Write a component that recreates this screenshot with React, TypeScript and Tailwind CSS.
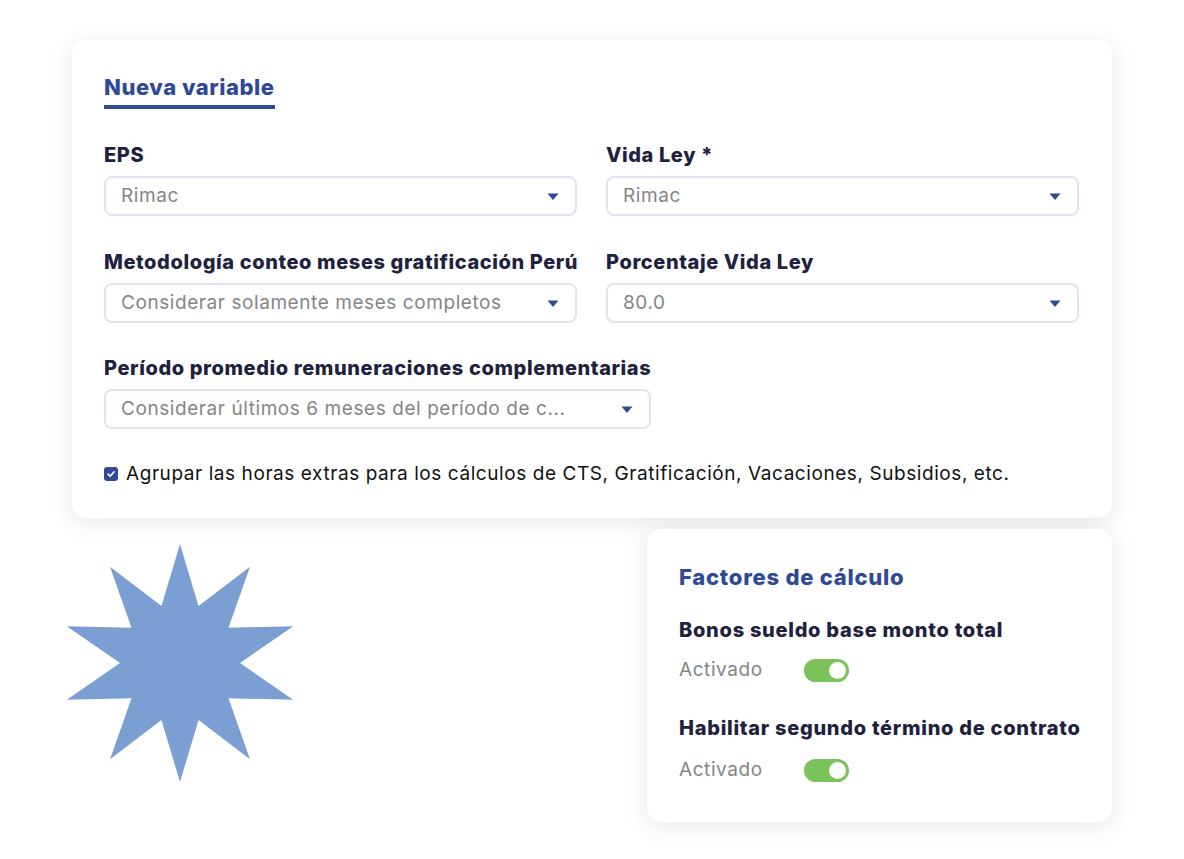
import React from "react";

const font = { fontFamily: "Inter, 'Noto Sans', sans-serif" };

function starPoints(cx: number, cy: number, R: number, r: number, n: number) {
  const pts: string[] = [];
  for (let i = 0; i < n * 2; i++) {
    const a = ((-90 + i * (180 / n)) * Math.PI) / 180;
    const rad = i % 2 === 0 ? R : r;
    pts.push(`${(cx + rad * Math.cos(a)).toFixed(2)},${(cy + rad * Math.sin(a)).toFixed(2)}`);
  }
  return pts.join(" ");
}

function Caret() {
  return (
    <svg width="12" height="8" viewBox="0 0 12 8" className="shrink-0">
      <path d="M0.5 0.5 L11.5 0.5 L6 7 Z" fill="#2f4996" />
    </svg>
  );
}

function Select({ value }: { value: string }) {
  return (
    <div className="h-[40px] rounded-lg border-2 border-[#e2e2f3] bg-white flex items-center justify-between pl-[15px] pr-[16px] pt-[1px]">
      <span className="text-[19px] tracking-[0.03em] text-[#858585] truncate">{value}</span>
      <Caret />
    </div>
  );
}

function Field({ label, value, className = "" }: { label: string; value: string; className?: string }) {
  return (
    <div className={className}>
      <div className="text-[20px] leading-[24px] font-extrabold tracking-[0.03em] text-[#1e2140] mb-[9px] whitespace-nowrap">
        {label}
      </div>
      <Select value={value} />
    </div>
  );
}

function Toggle() {
  return (
    <div className="w-[45px] h-[23px] rounded-full bg-[#7cc25a] flex items-center justify-end pr-[3px]">
      <div className="w-[17px] h-[17px] rounded-full bg-white" />
    </div>
  );
}

export default function App() {
  return (
    <main className="min-h-screen bg-white pt-[40px] pl-[72px]" style={font}>
      {/* Nueva variable */}
      <section className="w-[1040px] rounded-[14px] bg-white shadow-[0_4px_24px_rgba(0,0,0,0.10)] pt-[33px] pb-[32px] px-8">
        <div className="inline-block border-b-4 border-[#2f4996] pb-[4px]">
          <h1 className="text-[22px] leading-[28px] font-extrabold tracking-[0.025em] text-[#2f4996]">Nueva variable</h1>
        </div>

        <div className="grid grid-cols-2 gap-x-[29px] gap-y-[34px] mt-[34px] w-[975px]">
          <Field label="EPS" value="Rimac" />
          <Field label="Vida Ley *" value="Rimac" />
          <Field label="Metodología conteo meses gratificación Perú" value="Considerar solamente meses completos" />
          <Field label="Porcentaje Vida Ley" value="80.0" />
        </div>

        <Field
          className="mt-[33px] w-[547px]"
          label="Período promedio remuneraciones complementarias"
          value="Considerar últimos 6 meses del período de c..."
        />

        <div className="flex items-center gap-2 mt-[33px] h-[24px]">
          <div className="w-[14px] h-[14px] rounded-[3px] bg-[#2f4996] flex items-center justify-center">
            <svg width="10" height="10" viewBox="0 0 10 10">
              <path d="M2 5.2 L4.1 7.2 L8 2.9" fill="none" stroke="white" strokeWidth="1.6" strokeLinecap="round" strokeLinejoin="round" />
            </svg>
          </div>
          <span className="text-[19px] tracking-[0.03em] text-[#111111] whitespace-nowrap">
            Agrupar las horas extras para los cálculos de CTS, Gratificación, Vacaciones, Subsidios, etc.
          </span>
        </div>
      </section>

      <div className="flex items-start w-[1040px] mt-[11px]">
        <svg width="240" height="240" viewBox="0 0 240 240" className="-ml-[12px] mt-[14px] shrink-0">
          <polygon points={starPoints(120, 120, 119, 60, 10)} fill="#7b9fd3" />
        </svg>

        {/* Factores de cálculo */}
        <section className="ml-auto w-[465px] rounded-[14px] bg-white shadow-[0_4px_24px_rgba(0,0,0,0.10)] pt-[34px] pb-[40px] pl-8">
          <h2 className="text-[22px] leading-[28px] font-extrabold tracking-[0.034em] text-[#2f4996]">Factores de cálculo</h2>

          <div className="mt-[27px] text-[20px] leading-[24px] font-extrabold tracking-[0.036em] text-[#1e2140] whitespace-nowrap">
            Bonos sueldo base monto total
          </div>
          <div className="mt-[16px] flex items-center h-[24px]">
            <span className="w-[125px] text-[19px] tracking-[0.03em] text-[#858585]">Activado</span>
            <Toggle />
          </div>

          <div className="mt-[34px] text-[20px] leading-[24px] font-extrabold tracking-[0.036em] text-[#1e2140] whitespace-nowrap">
            Habilitar segundo término de contrato
          </div>
          <div className="mt-[18px] flex items-center h-[24px]">
            <span className="w-[125px] text-[19px] tracking-[0.03em] text-[#858585]">Activado</span>
            <Toggle />
          </div>
        </section>
      </div>
    </main>
  );
}
